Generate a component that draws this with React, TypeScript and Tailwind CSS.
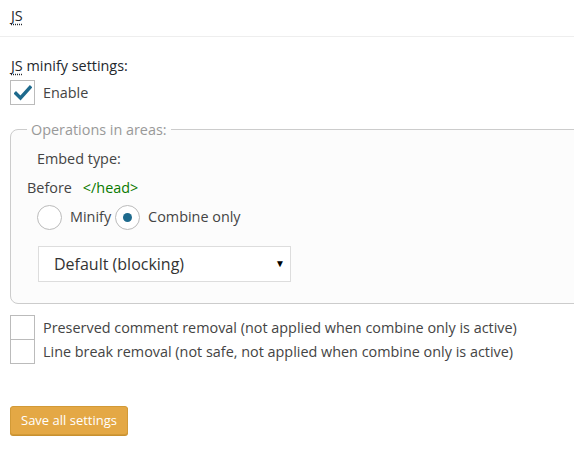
import React from "react";

function Check({ checked }: { checked?: boolean }) {
  return (
    <span className="flex h-[25px] w-[25px] shrink-0 items-center justify-center border border-[#bbb] bg-white">
      {checked && (
        <svg width="18" height="16" viewBox="0 0 18 16">
          <path d="M2 8.5 L6.5 13 L16 2.5" fill="none" stroke="#1e6a8d" strokeWidth="3.4" strokeLinecap="square" />
        </svg>
      )}
    </span>
  );
}

function Radio({ checked }: { checked?: boolean }) {
  return (
    <span className="flex h-[25px] w-[25px] shrink-0 items-center justify-center rounded-full border border-[#bbb] bg-white">
      {checked && <span className="h-[9px] w-[9px] rounded-full bg-[#1e6a8d]" />}
    </span>
  );
}

export default function App() {
  return (
    <div className="min-h-[453px] w-[574px] overflow-hidden bg-white text-[14.4px] text-[#444]" style={{ fontFamily: '"Open Sans", sans-serif' }}>
      <div className="h-[37px] border-b border-[#eee] pl-[11px] pt-[5px]">
        <abbr className="text-[#23282d] underline decoration-dotted underline-offset-[3px]">JS</abbr>
      </div>
      <div className="pl-[10px] pt-[18px]">
        <div className="pl-[1px] leading-[22px] text-[#23282d]">
          <abbr className="underline decoration-dotted underline-offset-[3px]">JS</abbr> minify settings:
        </div>
        <label className="mt-[3px] flex items-center gap-[8px]">
          <Check checked />
          <span>Enable</span>
        </label>
        <fieldset className="mt-[14px] -mr-[20px] h-[185px] rounded-[8px] border border-[#ccc] bg-[#fcfcfc] pl-[16px]">
          <legend className="px-[4px] text-[#999]">Operations in areas:</legend>
          <div className="pl-[10px] pt-[8px] leading-[20px]">Embed type:</div>
          <div className="mt-[9px] flex leading-[20px]">
            <span>Before</span>
            <span className="ml-[11px] text-[#0a7a00]">&lt;/head&gt;</span>
          </div>
          <div className="mt-[7px] flex items-center pl-[10px]">
            <Radio />
            <span className="ml-[8px] mr-[4px]">Minify</span>
            <Radio checked />
            <span className="ml-[8px]">Combine only</span>
          </div>
          <div className="ml-[11px] mt-[16px] flex h-[36px] w-[253px] items-center justify-between border border-[#ddd] bg-white pl-[15px] pr-[5px] text-[16px] text-[#333]">
            <span>Default (blocking)</span>
            <span className="text-[10px] text-black">▼</span>
          </div>
        </fieldset>
        <div className="mt-[11px] flex flex-col">
          <label className="flex items-center gap-[8px]">
            <Check />
            <span>Preserved comment removal (not applied when combine only is active)</span>
          </label>
          <label className="-mt-[1px] flex items-center gap-[8px]">
            <Check />
            <span>Line break removal (not safe, not applied when combine only is active)</span>
          </label>
        </div>
        <button className="mt-[42px] h-[29px] rounded-[3px] border border-[#d29a37] bg-[#e4a845] px-[10px] text-[13px] text-white shadow-[0_1px_0_#c89030]">
          Save all settings
        </button>
      </div>
    </div>
  );
}
